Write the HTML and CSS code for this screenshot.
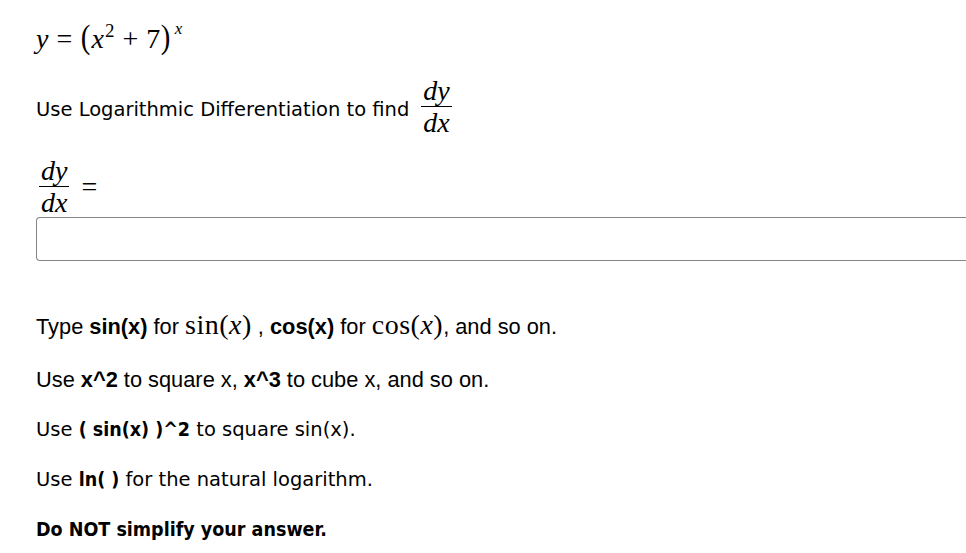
FILE: index.html
```html
<!DOCTYPE html>
<html>
<head>
<meta charset="utf-8">
<link rel="stylesheet" href="styles.css">
</head>
<body>
<div class="page">
  <div class="eq1 math">
    <i>y</i><span class="op">=</span><span class="paren">(</span><i>x</i><sup>2</sup><span class="op">+</span><span>7</span><span class="paren">)</span><sup class="supx"><i>x</i></sup>
  </div>
  <div class="prompt">
    <span class="txt">Use Logarithmic Differentiation to find</span>
    <span class="frac math"><span class="num"><i>dy</i></span><span class="den"><i>dx</i></span></span>
  </div>
  <div class="answer-label math">
    <span class="frac"><span class="num"><i>dy</i></span><span class="den"><i>dx</i></span></span>
    <span class="op eqsign">=</span>
  </div>
  <div class="input-box"></div>
  <div class="notes">
    <p class="alt">Type <b>sin(x)</b> for <span class="math">sin(<i>x</i>)</span> , <b>cos(x)</b> for <span class="math">cos(<i>x</i>)</span>, and so on.</p>
    <p class="alt alt2">Use <b>x^2</b> to square x, <b>x^3</b> to cube x, and so on.</p>
    <p>Use <b>( sin(x) )^2</b> to square sin(x).</p>
    <p>Use <b>ln( )</b> for the natural logarithm.</p>
    <p><b>Do NOT simplify your answer.</b></p>
  </div>
</div>
</body>
</html>
```
FILE: styles.css
```css
html, body {
  margin: 0;
  padding: 0;
  background: #fff;
  color: #000;
}
.page {
  padding-left: 36px;
  font-family: "DejaVu Sans", sans-serif;
  font-size: 19.5px;
}
.page b {
  font-stretch: condensed;
}
.math {
  font-family: "Liberation Serif", "DejaVu Serif", serif;
  font-size: 28px;
}
.math i {
  font-style: italic;
}
.eq1 {
  height: 40px;
  padding-top: 20px;
  line-height: 34px;
  white-space: nowrap;
}
.eq1 .op {
  margin: 0 8px;
}
.eq1 .paren {
  display: inline-block;
  font-size: 34px;
  transform: scaleX(0.85);
}
.eq1 sup {
  font-size: 19px;
  vertical-align: 11px;
  line-height: 0;
  margin-left: 1px;
}
.eq1 .supx {
  font-size: 17px;
  vertical-align: 14px;
  margin-left: 3px;
}
.prompt {
  display: flex;
  align-items: center;
  margin-top: 17px;
  height: 60px;
}
.prompt .txt {
  margin-right: 12px;
  padding-top: 5px;
}
.frac {
  display: inline-flex;
  flex-direction: column;
  align-items: center;
  line-height: 28px;
}
.frac .num {
  padding: 0 2px 1px;
  border-bottom: 1px solid #000;
}
.frac .den {
  padding: 2px 2px 0;
}
.answer-label {
  display: flex;
  align-items: center;
  margin-top: 20px;
  padding-left: 3px;
}
.eqsign {
  margin-left: 12px;
}
.input-box {
  margin-top: 0;
  height: 42px;
  border: 1px solid #858585;
  border-right: none;
  border-radius: 4px 0 0 4px;
}
.notes {
  margin-top: 52px;
}
.notes p {
  margin: 0 0 26px;
  line-height: 24px;
}
.notes p.alt {
  font-family: "Liberation Sans", Arial, sans-serif;
  font-size: 21.8px;
  margin-bottom: 29px;
}
.notes p.alt b {
  font-stretch: normal;
}
.notes p.alt2 {
  margin-bottom: 26px;
}
.notes .math {
  font-size: 28px;
  letter-spacing: 0.5px;
}
```
